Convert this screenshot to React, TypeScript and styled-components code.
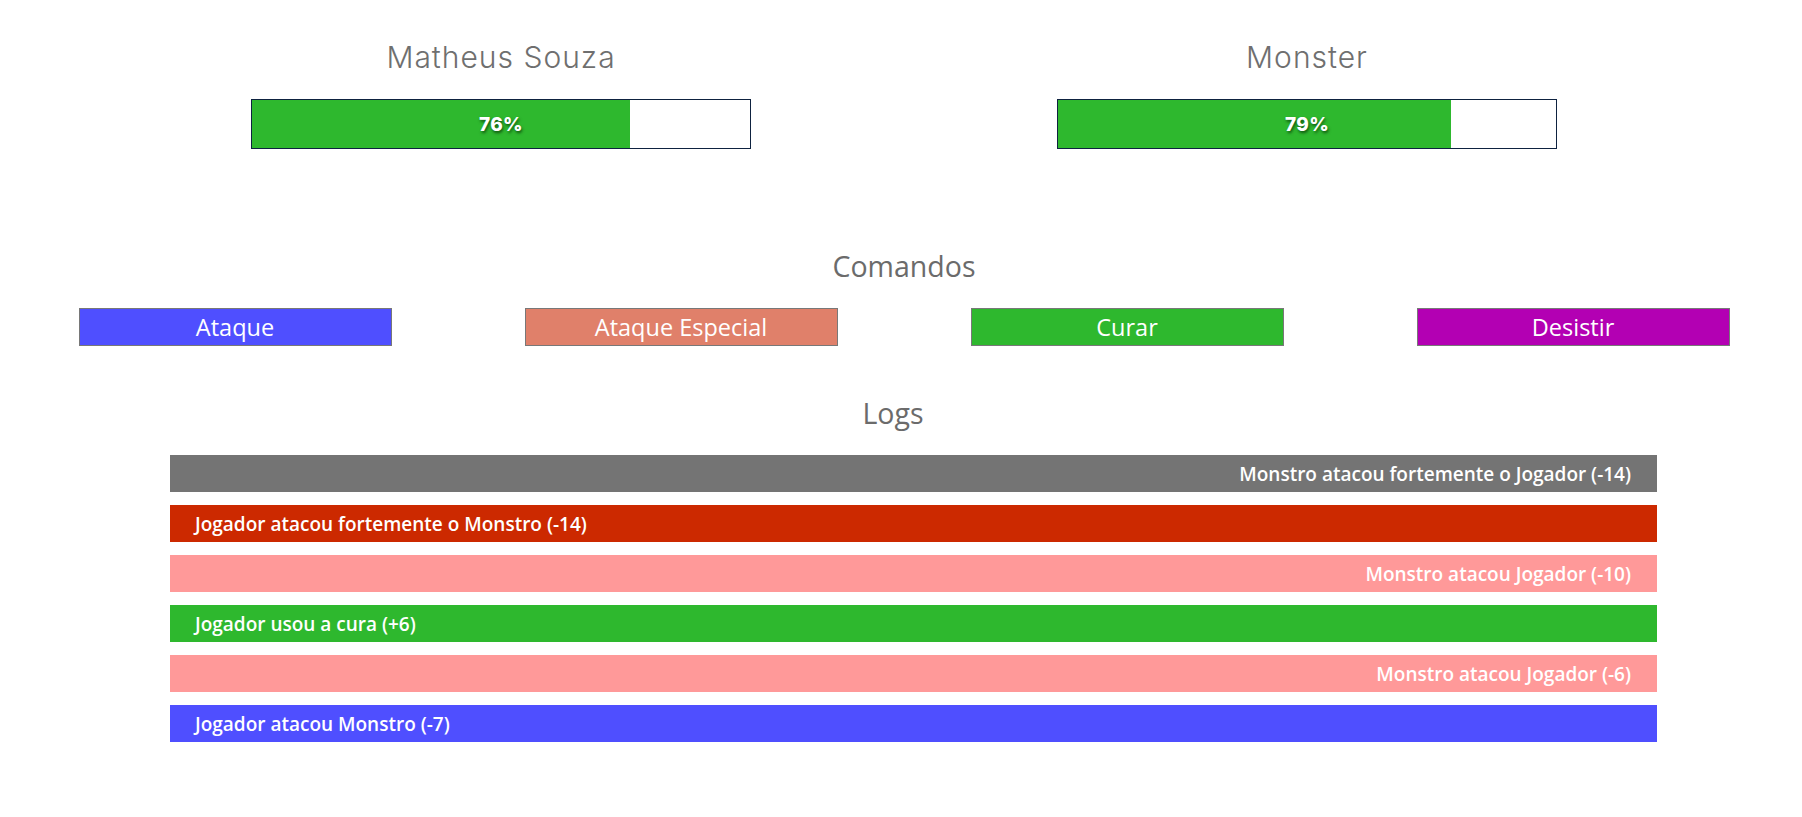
import React from "react";
import styled, { createGlobalStyle } from "styled-components";

const GlobalStyle = createGlobalStyle`
  html, body { margin: 0; padding: 0; background: #ffffff; }
  body { font-family: "Open Sans", "Noto Sans", sans-serif; }
  * { box-sizing: border-box; }
`;

const Page = styled.main`
  padding: 37px 0 60px 6px;
  display: flex;
  flex-direction: column;
`;

const HealthGrid = styled.section`
  display: grid;
  grid-template-columns: repeat(2, 806px);
  justify-content: center;
`;

const Fighter = styled.div`
  display: flex;
  flex-direction: column;
  align-items: center;
`;

const FighterName = styled.h1`
  margin: 0;
  font-family: "Inter", "Open Sans", sans-serif;
  font-weight: 300;
  font-size: 30px;
  line-height: 40px;
  letter-spacing: 1px;
  color: #6f6f6f;
`;

const Bar = styled.div`
  margin-top: 22px;
  width: 500px;
  height: 50px;
  border: 1px solid #0e2240;
  background: #ffffff;
  display: grid;
`;

const Fill = styled.div`
  grid-area: 1 / 1;
  height: 100%;
  background: #2eb82e;
`;

const Percent = styled.span`
  grid-area: 1 / 1;
  align-self: center;
  justify-self: center;
  font-family: "Inter", "Open Sans", sans-serif;
  font-weight: 800;
  font-size: 19px;
  letter-spacing: 0.3px;
  color: #ffffff;
  text-shadow: 1px 2px 3px rgba(0, 40, 0, 0.7);
`;

const SectionTitle = styled.h2<{ $top: number; $shift?: number }>`
  margin: ${(p) => p.$top}px ${(p) => (p.$shift ?? 0) * 2}px 0 0;
  text-align: center;
  font-weight: 400;
  font-size: 28.5px;
  line-height: 40px;
  color: #6b6b6b;
`;

const Commands = styled.div`
  margin-top: 22px;
  padding: 0 6px;
  display: grid;
  grid-template-columns: repeat(4, 1fr);
`;

const CommandButton = styled.button<{ $bg: string }>`
  justify-self: center;
  width: 313px;
  height: 38px;
  padding: 0;
  border: 1px solid #787878;
  background: ${(p) => p.$bg};
  color: #ffffff;
  font-family: "Open Sans", "Noto Sans", sans-serif;
  font-size: 23.5px;
  line-height: 36px;
  cursor: pointer;
`;

const LogList = styled.ul`
  list-style: none;
  margin: 22px 145px 0 164px;
  padding: 0;
  display: flex;
  flex-direction: column;
  gap: 13px;
`;

const LogItem = styled.li<{ $bg: string; $right?: boolean }>`
  height: 37px;
  padding: 0 26px 0 25px;
  display: flex;
  align-items: center;
  justify-content: ${(p) => (p.$right ? "flex-end" : "flex-start")};
  background: ${(p) => p.$bg};
  color: #ffffff;
  font-family: "Open Sans", "Noto Sans", sans-serif;
  font-weight: 600;
  font-size: 19px;
`;

const fighters = [
  { name: "Matheus Souza", health: 76 },
  { name: "Monster", health: 79 },
];

const commands = [
  { label: "Ataque", bg: "#4f4fff" },
  { label: "Ataque Especial", bg: "#e0806a" },
  { label: "Curar", bg: "#2eb82e" },
  { label: "Desistir", bg: "#b300b3" },
];

const logs = [
  { text: "Monstro atacou fortemente o Jogador (-14)", bg: "#747474", right: true },
  { text: "Jogador atacou fortemente o Monstro (-14)", bg: "#cc2900", right: false },
  { text: "Monstro atacou Jogador (-10)", bg: "#ff9999", right: true },
  { text: "Jogador usou a cura (+6)", bg: "#2eb82e", right: false },
  { text: "Monstro atacou Jogador (-6)", bg: "#ff9999", right: true },
  { text: "Jogador atacou Monstro (-7)", bg: "#4f4fff", right: false },
];

export default function App() {
  return (
    <>
      <GlobalStyle />
      <Page>
        <HealthGrid>
          {fighters.map((f) => (
            <Fighter key={f.name}>
              <FighterName>{f.name}</FighterName>
              <Bar>
                <Fill style={{ width: `${f.health}%` }} />
                <Percent>{f.health}%</Percent>
              </Bar>
            </Fighter>
          ))}
        </HealthGrid>

        <SectionTitle $top={97}>Comandos</SectionTitle>
        <Commands>
          {commands.map((c) => (
            <CommandButton key={c.label} $bg={c.bg}>
              {c.label}
            </CommandButton>
          ))}
        </Commands>

        <SectionTitle $top={47} $shift={11}>Logs</SectionTitle>
        <LogList>
          {logs.map((l, i) => (
            <LogItem key={i} $bg={l.bg} $right={l.right}>
              {l.text}
            </LogItem>
          ))}
        </LogList>
      </Page>
    </>
  );
}
